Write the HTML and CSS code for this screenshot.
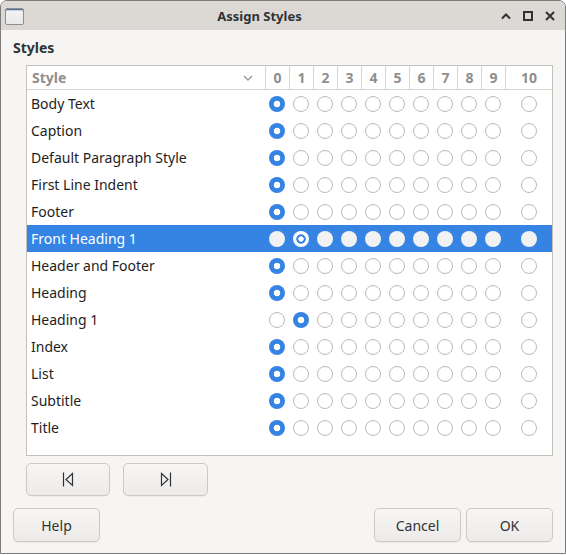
FILE: index.html
```html
<!DOCTYPE html>
<html lang="en">
<head>
<meta charset="utf-8">
<title>Assign Styles</title>
<link rel="stylesheet" href="styles.css">
</head>
<body>
<div class="window">
  <header class="titlebar">
    <span class="app-icon"></span>
    <h1 class="title">Assign Styles</h1>
    <div class="wm-buttons">
      <span class="wm-btn"><svg width="12" height="12" viewBox="0 0 12 12"><path d="M2 8.5 L6 4.5 L10 8.5" fill="none" stroke="#2e3436" stroke-width="2"/></svg></span>
      <span class="wm-btn"><svg width="12" height="12" viewBox="0 0 12 12"><rect x="2" y="2" width="8" height="8" fill="none" stroke="#2e3436" stroke-width="2"/></svg></span>
      <span class="wm-btn"><svg width="12" height="12" viewBox="0 0 12 12"><path d="M2 2 L10 10 M10 2 L2 10" fill="none" stroke="#2e3436" stroke-width="2"/></svg></span>
    </div>
  </header>

  <main class="content">
    <h2 class="section-label">Styles</h2>

    <div class="levels">
      <div class="levels-head">
        <div class="head-style"><span>Style</span><svg width="10" height="6" viewBox="0 0 10 6"><path d="M1 1 L5 5 L9 1" fill="none" stroke="#9a9a9a" stroke-width="1.4"/></svg></div>
        <div class="head-num">0</div><div class="head-num">1</div><div class="head-num">2</div><div class="head-num">3</div><div class="head-num">4</div><div class="head-num">5</div><div class="head-num">6</div><div class="head-num">7</div><div class="head-num">8</div><div class="head-num">9</div><div class="head-num">10</div>
      </div>

      <div class="level-row"><span class="style-name">Body Text</span><span class="radio on"></span><span class="radio"></span><span class="radio"></span><span class="radio"></span><span class="radio"></span><span class="radio"></span><span class="radio"></span><span class="radio"></span><span class="radio"></span><span class="radio"></span><span class="radio"></span></div>
      <div class="level-row"><span class="style-name">Caption</span><span class="radio on"></span><span class="radio"></span><span class="radio"></span><span class="radio"></span><span class="radio"></span><span class="radio"></span><span class="radio"></span><span class="radio"></span><span class="radio"></span><span class="radio"></span><span class="radio"></span></div>
      <div class="level-row"><span class="style-name">Default Paragraph Style</span><span class="radio on"></span><span class="radio"></span><span class="radio"></span><span class="radio"></span><span class="radio"></span><span class="radio"></span><span class="radio"></span><span class="radio"></span><span class="radio"></span><span class="radio"></span><span class="radio"></span></div>
      <div class="level-row"><span class="style-name">First Line Indent</span><span class="radio on"></span><span class="radio"></span><span class="radio"></span><span class="radio"></span><span class="radio"></span><span class="radio"></span><span class="radio"></span><span class="radio"></span><span class="radio"></span><span class="radio"></span><span class="radio"></span></div>
      <div class="level-row"><span class="style-name">Footer</span><span class="radio on"></span><span class="radio"></span><span class="radio"></span><span class="radio"></span><span class="radio"></span><span class="radio"></span><span class="radio"></span><span class="radio"></span><span class="radio"></span><span class="radio"></span><span class="radio"></span></div>
      <div class="level-row selected"><span class="style-name">Front Heading 1</span><span class="radio"></span><span class="radio on"></span><span class="radio"></span><span class="radio"></span><span class="radio"></span><span class="radio"></span><span class="radio"></span><span class="radio"></span><span class="radio"></span><span class="radio"></span><span class="radio"></span></div>
      <div class="level-row"><span class="style-name">Header and Footer</span><span class="radio on"></span><span class="radio"></span><span class="radio"></span><span class="radio"></span><span class="radio"></span><span class="radio"></span><span class="radio"></span><span class="radio"></span><span class="radio"></span><span class="radio"></span><span class="radio"></span></div>
      <div class="level-row"><span class="style-name">Heading</span><span class="radio on"></span><span class="radio"></span><span class="radio"></span><span class="radio"></span><span class="radio"></span><span class="radio"></span><span class="radio"></span><span class="radio"></span><span class="radio"></span><span class="radio"></span><span class="radio"></span></div>
      <div class="level-row"><span class="style-name">Heading 1</span><span class="radio"></span><span class="radio on"></span><span class="radio"></span><span class="radio"></span><span class="radio"></span><span class="radio"></span><span class="radio"></span><span class="radio"></span><span class="radio"></span><span class="radio"></span><span class="radio"></span></div>
      <div class="level-row"><span class="style-name">Index</span><span class="radio on"></span><span class="radio"></span><span class="radio"></span><span class="radio"></span><span class="radio"></span><span class="radio"></span><span class="radio"></span><span class="radio"></span><span class="radio"></span><span class="radio"></span><span class="radio"></span></div>
      <div class="level-row"><span class="style-name">List</span><span class="radio on"></span><span class="radio"></span><span class="radio"></span><span class="radio"></span><span class="radio"></span><span class="radio"></span><span class="radio"></span><span class="radio"></span><span class="radio"></span><span class="radio"></span><span class="radio"></span></div>
      <div class="level-row"><span class="style-name">Subtitle</span><span class="radio on"></span><span class="radio"></span><span class="radio"></span><span class="radio"></span><span class="radio"></span><span class="radio"></span><span class="radio"></span><span class="radio"></span><span class="radio"></span><span class="radio"></span><span class="radio"></span></div>
      <div class="level-row"><span class="style-name">Title</span><span class="radio on"></span><span class="radio"></span><span class="radio"></span><span class="radio"></span><span class="radio"></span><span class="radio"></span><span class="radio"></span><span class="radio"></span><span class="radio"></span><span class="radio"></span><span class="radio"></span></div>
    </div>

    <div class="nav-buttons">
      <button class="btn nav-btn"><svg width="12" height="15" viewBox="0 0 12 15"><path d="M1.5 0.5 V14.5" stroke="#2e3436" stroke-width="1.2"/><path d="M10.5 1.5 L4 7.5 L10.5 13.5 Z" fill="none" stroke="#2e3436" stroke-width="1.2" stroke-linejoin="miter"/></svg></button>
      <button class="btn nav-btn"><svg width="12" height="15" viewBox="0 0 12 15"><path d="M1.5 1.5 L8 7.5 L1.5 13.5 Z" fill="none" stroke="#2e3436" stroke-width="1.2"/><path d="M10.5 0.5 V14.5" stroke="#2e3436" stroke-width="1.2"/></svg></button>
    </div>

    <div class="dialog-buttons">
      <button class="btn">Help</button>
      <span class="spacer"></span>
      <button class="btn">Cancel</button>
      <button class="btn">OK</button>
    </div>
  </main>
</div>
</body>
</html>
```

FILE: styles.css
```css
html, body {
  margin: 0;
  padding: 0;
  background: #ffffff;
}

body {
  font-family: "Noto Sans", "DejaVu Sans", sans-serif;
  font-size: 14px;
  color: #1e1e1e;
}

.window {
  width: 566px;
  height: 554px;
  box-sizing: border-box;
  border: 1px solid #7c7c7c;
  border-radius: 7px 7px 0 0;
  background: #f6f5f4;
  display: flex;
  flex-direction: column;
  overflow: hidden;
}

/* ---- title bar ---- */
.titlebar {
  height: 29px;
  flex: none;
  display: flex;
  align-items: center;
  padding: 0 4px;
  background: #dcd9d5;
}

.app-icon {
  width: 19px;
  height: 17px;
  box-sizing: border-box;
  border: 1px solid #8e8e8e;
  border-radius: 2px;
  background: linear-gradient(#f4f4f4, #e9e9e9);
  box-shadow: inset 0 1px 0 #4f73a0, inset 0 2px 0 #c8d4e4;
  margin-top: 1px;
}

.title {
  flex: 1;
  margin: 0;
  text-align: center;
  font-size: 13px;
  font-weight: bold;
  color: #2e3436;
}

.wm-buttons {
  display: flex;
}

.wm-btn {
  width: 22px;
  height: 22px;
  display: flex;
  align-items: center;
  justify-content: center;
}

/* ---- dialog content ---- */
.content {
  flex: 1;
  display: flex;
  flex-direction: column;
  padding: 0 12px;
}

.section-label {
  margin: 8px 0 0 0;
  font-size: 14px;
  font-weight: bold;
  line-height: 19px;
  color: #2e3436;
}

.levels {
  margin: 8px 0 0 13px;
  height: 391px;
  box-sizing: border-box;
  border: 1px solid #c4c1bd;
  background: #ffffff;
}

.levels-head,
.level-row {
  display: grid;
  grid-template-columns: 238px repeat(10, 24px) 47px;
}

.levels-head {
  height: 24px;
  box-sizing: border-box;
  border-bottom: 1px solid #d6d3d0;
  color: #8f8f8f;
  font-weight: bold;
}

.head-style {
  display: flex;
  align-items: center;
  justify-content: space-between;
  padding: 0 12px 0 5px;
}

.head-num {
  border-left: 1px solid #d9d7d4;
  display: flex;
  align-items: center;
  justify-content: center;
}

.level-row {
  height: 27px;
  align-items: center;
}

.style-name {
  padding-left: 4px;
  white-space: nowrap;
}

.level-row.selected {
  background: #3584e4;
  color: #ffffff;
}

/* radio buttons */
.radio {
  justify-self: center;
  width: 16px;
  height: 16px;
  box-sizing: border-box;
  border-radius: 50%;
  border: 1px solid #bcbab7;
  background: #ffffff;
}

.radio.on {
  border: none;
  background: radial-gradient(circle, #ffffff 0 3px, #3584e4 3.6px);
}

.selected .radio {
  border: none;
  background: #f2f2f2;
}

.selected .radio.on {
  background: radial-gradient(circle, #ffffff 0 2.4px, #3584e4 3px 4.4px, #ffffff 5px);
}

/* ---- buttons ---- */
.btn {
  font-family: inherit;
  font-size: 14px;
  color: #2e3436;
  height: 34px;
  box-sizing: border-box;
  border: 1px solid #cdc8c3;
  border-radius: 5px;
  background: linear-gradient(#f7f6f5, #edebe9);
  box-shadow: 0 1px 0 rgba(0, 0, 0, 0.04);
  padding: 0;
  display: flex;
  align-items: center;
  justify-content: center;
}

.nav-buttons {
  display: flex;
  gap: 13px;
  margin: 7px 0 0 13px;
}

.nav-btn {
  width: 84px;
  height: 33px;
}

.nav-btn + .nav-btn {
  width: 85px;
}

.dialog-buttons {
  display: flex;
  gap: 5px;
  margin-top: 12px;
}

.dialog-buttons .btn {
  width: 87px;
}

.spacer {
  flex: 1;
}
```
